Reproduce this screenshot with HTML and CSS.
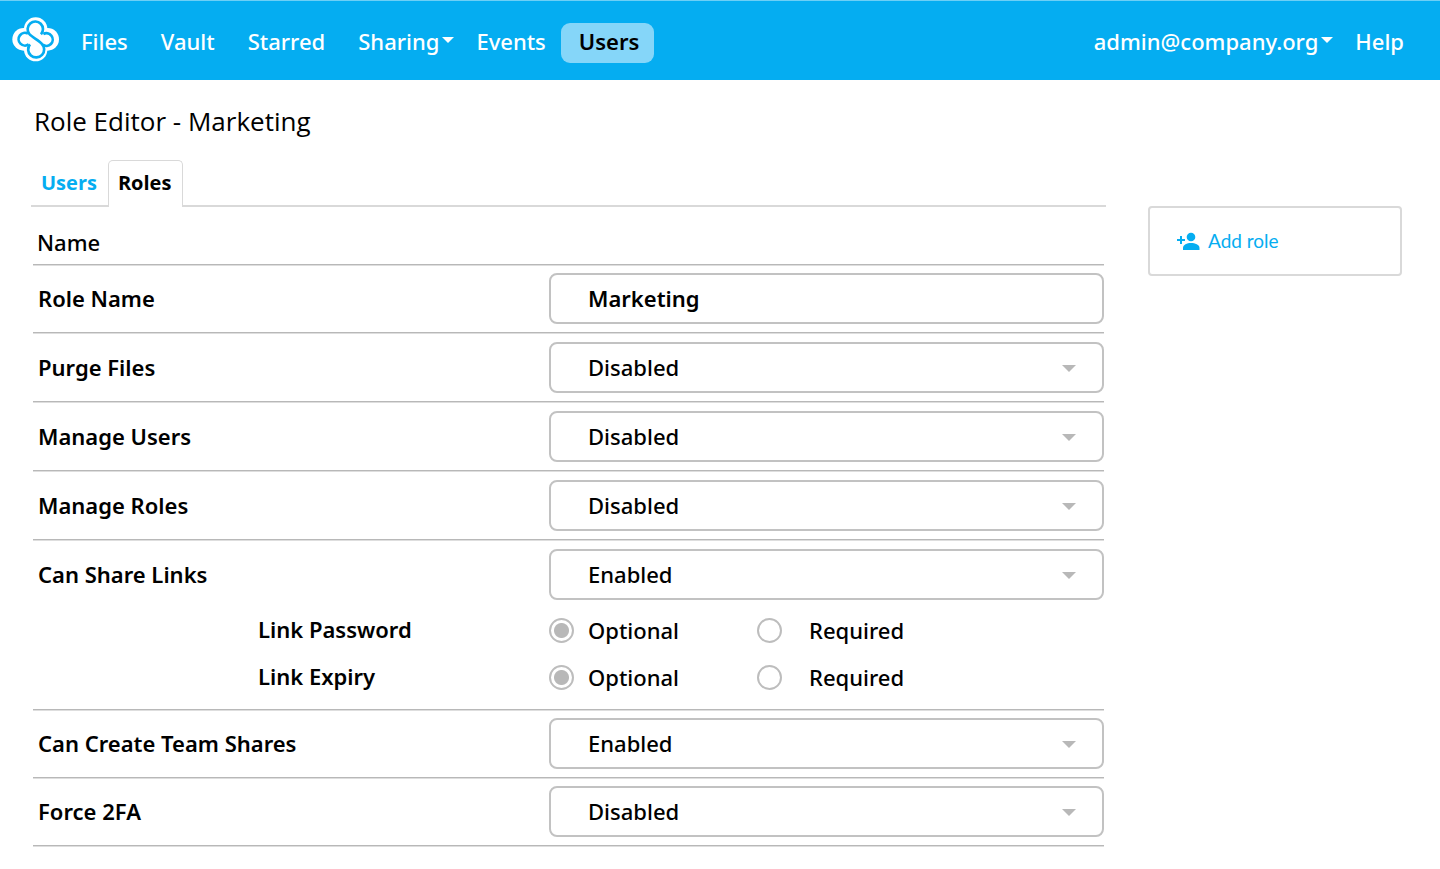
FILE: index.html
```html
<!DOCTYPE html>
<html lang="en">
<head>
<meta charset="utf-8">
<meta name="viewport" content="width=device-width, initial-scale=1">
<title>Role Editor - Marketing</title>
<link rel="stylesheet" href="styles.css">
</head>
<body>
<header class="topbar">
  <a class="logo" href="#" aria-label="Home">
    <svg width="48" height="46" viewBox="0 0 144 138" aria-hidden="true">
      <g fill="#fff">
        <circle cx="71" cy="36" r="35"/>
        <circle cx="71" cy="98" r="35"/>
        <circle cx="35" cy="67" r="34"/>
        <circle cx="107" cy="67" r="34"/>
      </g>
      <g fill="none" stroke="#05adf1" stroke-width="8">
        <path d="M87 52A23 23 0 1 0 52 51C59 60 82 71 89 80A24 24 0 1 1 54 82"/>
        <path d="M48 50A19 19 0 1 0 50 82"/>
        <path d="M94 51A19 19 0 1 1 92 83"/>
      </g>
    </svg>
  </a>
  <nav class="nav" aria-label="Main">
    <a href="#">Files</a>
    <a href="#">Vault</a>
    <a href="#">Starred</a>
    <a class="nav-menu" href="#">Sharing<span class="caret"></span></a>
    <a class="nav-events" href="#">Events</a>
    <a class="nav-active" href="#" aria-current="page">Users</a>
  </nav>
  <nav class="nav nav-account" aria-label="Account">
    <a class="nav-menu" href="#">admin@company.org<span class="caret"></span></a>
    <a href="#">Help</a>
  </nav>
</header>

<div class="page">
  <main>
    <h1 class="title">Role Editor - Marketing</h1>
    <nav class="tabs" aria-label="Sections">
      <a class="tab" href="#">Users</a>
      <a class="tab tab-active" href="#" aria-current="page">Roles</a>
    </nav>
    <form class="settings">
      <h2 class="heading">Name</h2>
      <div class="row row-compact">
        <label for="role-name">Role Name</label>
        <input class="control control-text" id="role-name" type="text" value="Marketing">
      </div>
      <div class="row">
        <label for="purge">Purge Files</label>
        <div class="select"><select class="control" id="purge"><option>Disabled</option><option>Enabled</option></select></div>
      </div>
      <div class="row">
        <label for="manage-users">Manage Users</label>
        <div class="select"><select class="control" id="manage-users"><option>Disabled</option><option>Enabled</option></select></div>
      </div>
      <div class="row">
        <label for="manage-roles">Manage Roles</label>
        <div class="select"><select class="control" id="manage-roles"><option>Disabled</option><option>Enabled</option></select></div>
      </div>
      <div class="row row-group">
        <label for="share-links">Can Share Links</label>
        <div class="select"><select class="control" id="share-links"><option>Enabled</option><option>Disabled</option></select></div>
        <div class="sub" role="radiogroup" aria-labelledby="link-password">
          <span class="sub-label" id="link-password">Link Password</span>
          <div class="choices">
            <label class="choice"><input type="radio" name="password" checked>Optional</label>
            <label class="choice choice-wide"><input type="radio" name="password">Required</label>
          </div>
        </div>
        <div class="sub" role="radiogroup" aria-labelledby="link-expiry">
          <span class="sub-label" id="link-expiry">Link Expiry</span>
          <div class="choices">
            <label class="choice"><input type="radio" name="expiry" checked>Optional</label>
            <label class="choice choice-wide"><input type="radio" name="expiry">Required</label>
          </div>
        </div>
      </div>
      <div class="row row-compact">
        <label for="team-shares">Can Create Team Shares</label>
        <div class="select"><select class="control" id="team-shares"><option>Enabled</option><option>Disabled</option></select></div>
      </div>
      <div class="row row-compact">
        <label for="force-2fa">Force 2FA</label>
        <div class="select"><select class="control" id="force-2fa"><option>Disabled</option><option>Enabled</option></select></div>
      </div>
    </form>
  </main>
  <aside class="actions">
    <button class="add-role" type="button">
      <svg width="24" height="18" viewBox="0 0 24 18" fill="currentColor" aria-hidden="true">
        <circle cx="15" cy="5" r="4.3"/>
        <path d="M7 18v-2c0-3.500 4-5 8-5s8.500 1.500 8.500 5v2z"/>
        <path d="M4 4h2v3h3v2H6v3H4V9H1V7h3z"/>
      </svg>
      Add role
    </button>
  </aside>
</div>
</body>
</html>
```

FILE: styles.css
```css
* {
  box-sizing: border-box;
}

body {
  margin: 0;
  background: #fff;
  color: #000;
  font-family: "Noto Sans", "Open Sans", sans-serif;
  font-size: 22px;
  font-weight: 500;
  line-height: 30px;
}

a {
  color: inherit;
  text-decoration: none;
}

.topbar {
  display: flex;
  align-items: center;
  height: 80px;
  padding: 4px 36px 0 12px;
  border-top: 1px solid #6dcff6;
  background: #05adf1;
  color: #fff;
}

.logo {
  display: flex;
  margin: 0 21px 5px 0;
}

.nav {
  display: flex;
  align-items: center;
  gap: 33px;
}

.nav a {
  padding-top: 3px;
  padding-bottom: 7px;
}

.nav-account {
  gap: 22px;
  margin-left: auto;
}

.nav-menu {
  display: flex;
  align-items: center;
  gap: 3px;
}

.nav-events {
  margin-left: -11px;
}

.nav-active {
  margin-left: -18px;
  padding: 0 15px 0 18px;
  border-radius: 9px;
  background: #85d6f9;
  color: #000;
  font-weight: 600;
}

.caret {
  border: 6px solid transparent;
  border-top-color: currentColor;
  border-bottom: 0;
  margin-bottom: 2px;
}

.page {
  display: grid;
  grid-template-columns: 1fr 254px;
  column-gap: 42px;
  padding: 24px 38px 22px 31px;
}

.title {
  margin: 0 0 21px 3px;
  font-family: "Open Sans", sans-serif;
  font-size: 26px;
  font-weight: 400;
  line-height: 35px;
}

.tabs {
  display: flex;
  height: 47px;
  border-bottom: 2px solid #d9d9d9;
  font-family: "Open Sans", sans-serif;
  font-size: 20px;
  font-weight: 700;
}

.tab {
  padding: 8px 11px 8px 10px;
  color: #05adf1;
}

.tab-active {
  height: 47px;
  padding: 7px 11px 7px 9px;
  border: 1px solid #d9d9d9;
  border-bottom: 0;
  border-radius: 5px 5px 0 0;
  background: #fff;
  color: #000;
}

.settings {
  margin: 0 2px;
}

.heading {
  margin: 0;
  padding: 20px 4px 7px;
  border-bottom: 1px solid #b8b8b8;
  box-shadow: 0 1px #dedede;
  font-size: 22px;
  font-weight: 500;
}

.row {
  display: grid;
  grid-template-columns: 516fr 555fr;
  align-items: center;
  padding: 9px 0 8px;
  border-bottom: 1px solid #b8b8b8;
  box-shadow: 0 1px #dedede;
}

.row > label,
.sub-label {
  padding: 0 0 2px 5px;
  font-weight: 600;
}

.row-compact {
  padding-top: 8px;
}

.control {
  display: block;
  width: 100%;
  height: 51px;
  padding: 0 37px 1px;
  border: 2px solid #c2c2c2;
  border-radius: 8px;
  background: #fff;
  color: #000;
  font: inherit;
  appearance: none;
}

.control-text {
  font-weight: 600;
}

.select {
  position: relative;
}

.select::after {
  content: "";
  position: absolute;
  top: 23px;
  right: 28px;
  border: 7px solid transparent;
  border-top-color: #b8b8b8;
  border-bottom: 0;
  pointer-events: none;
}

.row-group {
  padding-bottom: 9px;
}

.row-group > label,
.row-group > .select {
  margin-bottom: 6px;
}

.sub {
  display: grid;
  grid-column: 1 / -1;
  grid-template-columns: 516fr 555fr;
  align-items: center;
  height: 47px;
}

.sub-label {
  padding-left: 225px;
}

.choices {
  display: grid;
  grid-template-columns: 208px 1fr;
}

.choice {
  display: flex;
  align-items: center;
  gap: 14px;
}

.choice-wide {
  gap: 27px;
}

.choice input {
  width: 25px;
  height: 25px;
  margin: 2px 0 0;
  border: 2px solid #bdbdbd;
  border-radius: 50%;
  background: #fff;
  appearance: none;
}

.choice input:checked {
  background: radial-gradient(circle, #b8b8b8 7px, #fff 8px);
}

.actions {
  align-self: start;
  margin-top: 102px;
  padding: 18px 26px;
  border: 2px solid #d9d9d9;
  border-radius: 4px;
}

.add-role {
  display: flex;
  align-items: center;
  gap: 8px;
  padding: 0;
  border: 0;
  background: none;
  color: #05adf1;
  font: 400 19px/30px Lato, sans-serif;
}
```
